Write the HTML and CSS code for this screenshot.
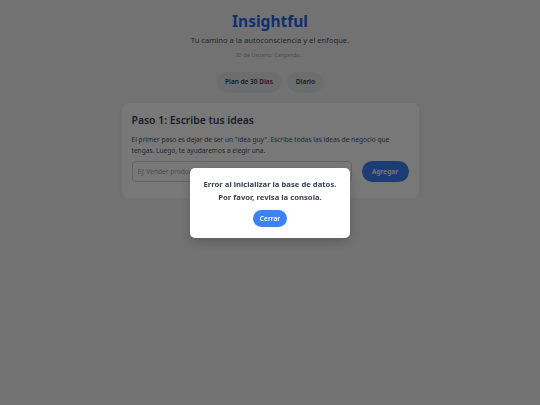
FILE: index.html
```html
<!DOCTYPE html>
<html lang="es">
<head>
  <meta charset="UTF-8">
  <meta name="viewport" content="width=device-width, initial-scale=1.0">
  <title>Insightful</title>
  <link rel="stylesheet" href="styles.css">
</head>
<body>
  <div id="app">
    <header class="header">
      <h1 class="title">Insightful</h1>
      <p class="subtitle">Tu camino a la autoconsciencia y el enfoque.</p>
      <p class="user-id">ID de Usuario: Cargando...</p>
    </header>

    <nav class="tabs">
      <button class="tab">Plan de 30 Días</button>
      <button class="tab">Diario</button>
    </nav>

    <section class="card">
      <h2 class="card-title">Paso 1: Escribe tus ideas</h2>
      <p class="card-text">El primer paso es dejar de ser un "idea guy". Escribe todas las ideas de negocio que tengas. Luego, te ayudaremos a elegir una.</p>
      <form class="idea-form">
        <input class="idea-input" placeholder="Ej: Vender productos hechos a mano">
        <button class="add-btn" type="button">Agregar</button>
      </form>
    </section>
  </div>

  <div class="overlay">
    <div class="modal">
      <p class="modal-text">Error al inicializar la base de datos. Por favor, revisa la consola.</p>
      <button class="close-btn">Cerrar</button>
    </div>
  </div>
</body>
</html>
```

FILE: styles.css
```css
* {
  margin: 0;
  padding: 0;
  box-sizing: border-box;
  font-family: "Noto Sans", sans-serif;
}

body {
  background-color: #f3f3f3;
  color: #374151;
}

#app {
  padding-top: 11px;
}

.header {
  text-align: center;
}

.title {
  font-size: 15.5px;
  line-height: 20px;
  font-weight: 700;
  color: #2563eb;
}

.subtitle {
  font-size: 7.6px;
  line-height: 10px;
  color: #4b5563;
  margin-top: 4px;
}

.user-id {
  font-size: 5.5px;
  line-height: 8px;
  color: #9ca3af;
  margin-top: 6px;
}

.tabs {
  display: flex;
  justify-content: center;
  gap: 7px;
  margin-top: 13px;
}

.tab {
  border: none;
  background-color: #e5e7eb;
  color: #374151;
  font-size: 6.5px;
  font-weight: 600;
  height: 19px;
  padding: 0 8px;
  border-radius: 10px;
  box-shadow: 0 1px 2px rgba(0, 0, 0, 0.08);
}

.card {
  width: 297px;
  margin: 12px auto 0;
  background-color: white;
  border-radius: 6px;
  padding: 10px 10px 16px;
  box-shadow: 0 2px 6px rgba(0, 0, 0, 0.08);
}

.card-title {
  font-size: 10.4px;
  line-height: 14px;
  font-weight: 600;
  color: #374151;
}

.card-text {
  font-size: 6.6px;
  line-height: 11px;
  color: #4b5563;
  margin-top: 6.5px;
}

.idea-form {
  display: flex;
  gap: 10px;
  margin-top: 5.5px;
}

.idea-input {
  flex: 1;
  height: 21px;
  border: 1px solid #d1d5db;
  border-radius: 4px;
  padding: 0 5px;
  font-size: 6.6px;
  color: #374151;
}

.idea-input::placeholder {
  color: #9ca3af;
}

.add-btn {
  width: 47px;
  height: 21px;
  border: none;
  border-radius: 11px;
  background-color: #3b82f6;
  color: white;
  font-size: 6.6px;
  font-weight: 600;
}

.overlay {
  position: fixed;
  inset: 0;
  background-color: rgba(0, 0, 0, 0.53);
  display: flex;
  align-items: center;
  justify-content: center;
}

.modal {
  width: 160px;
  background-color: white;
  border-radius: 5px;
  padding: 10px 12px 11px;
  text-align: center;
  box-shadow: 0 4px 12px rgba(0, 0, 0, 0.2);
}

.modal-text {
  font-size: 7.7px;
  line-height: 13px;
  font-weight: 700;
  color: #374151;
}

.close-btn {
  margin-top: 6px;
  height: 17px;
  padding: 0 7px;
  border: none;
  border-radius: 9px;
  background-color: #3b82f6;
  color: white;
  font-size: 6.6px;
  font-weight: 600;
}
```
